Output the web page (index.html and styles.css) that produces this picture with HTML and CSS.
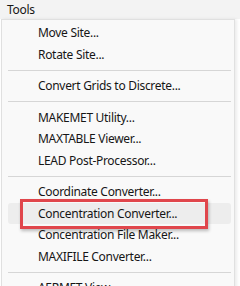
FILE: index.html
```html
<!DOCTYPE html>
<html>
<head>
<meta charset="utf-8">
<link rel="stylesheet" href="styles.css">
</head>
<body>
<div class="menubar"><span class="menubar-title">Tools</span></div>
<div class="menu">
  <div class="item">Move Site...</div>
  <div class="item">Rotate Site...</div>
  <div class="sep"></div>
  <div class="item">Convert Grids to Discrete...</div>
  <div class="sep"></div>
  <div class="item">MAKEMET Utility...</div>
  <div class="item">MAXTABLE Viewer...</div>
  <div class="item">LEAD Post-Processor...</div>
  <div class="sep"></div>
  <div class="item">Coordinate Converter...</div>
  <div class="item item-hover">Concentration Converter...<span class="callout"></span></div>
  <div class="item">Concentration File Maker...</div>
  <div class="item">MAXIFILE Converter...</div>
  <div class="sep"></div>
  <div class="item">AERMET View...</div>
</div>
</body>
</html>
```

FILE: styles.css
```css
html, body {
  margin: 0;
  padding: 0;
  background: #ffffff;
  overflow: hidden;
}
body {
  width: 240px;
  height: 286px;
  font-family: "Noto Sans", "Liberation Sans", sans-serif;
  font-size: 12px;
  letter-spacing: -0.3px;
  color: #161616;
}
.menubar {
  height: 19px;
  background: #f3f3f3;
  display: flex;
  align-items: center;
  padding-left: 7px;
}
.menubar-title {
  line-height: 19px;
}
.menu {
  margin-left: 1px;
  width: 232px;
  height: 300px;
  background: #f9f9f9;
  border: 1px solid #e0e0e0;
  border-bottom: none;
  padding: 2px 0 0 0;
  box-shadow: 2px 0 3px rgba(0, 0, 0, 0.08);
}
.item {
  position: relative;
  height: 21.5px;
  line-height: 21.5px;
  padding-left: 30px;
  margin: 0 3px 0 6px;
  border-radius: 3px;
  white-space: nowrap;
}
.item-hover {
  background: #ededed;
}
.sep {
  height: 10px;
  display: flex;
  align-items: center;
  margin: 0 3px 0 6px;
}
.sep::before {
  content: "";
  flex: 1;
  height: 1px;
  background: #d6d6d6;
}
.callout {
  position: absolute;
  left: 12px;
  top: -4px;
  width: 182px;
  height: 24px;
  border: 3px solid #e0464c;
  box-shadow: 1px 2px 3px rgba(0, 0, 0, 0.25);
}
```
